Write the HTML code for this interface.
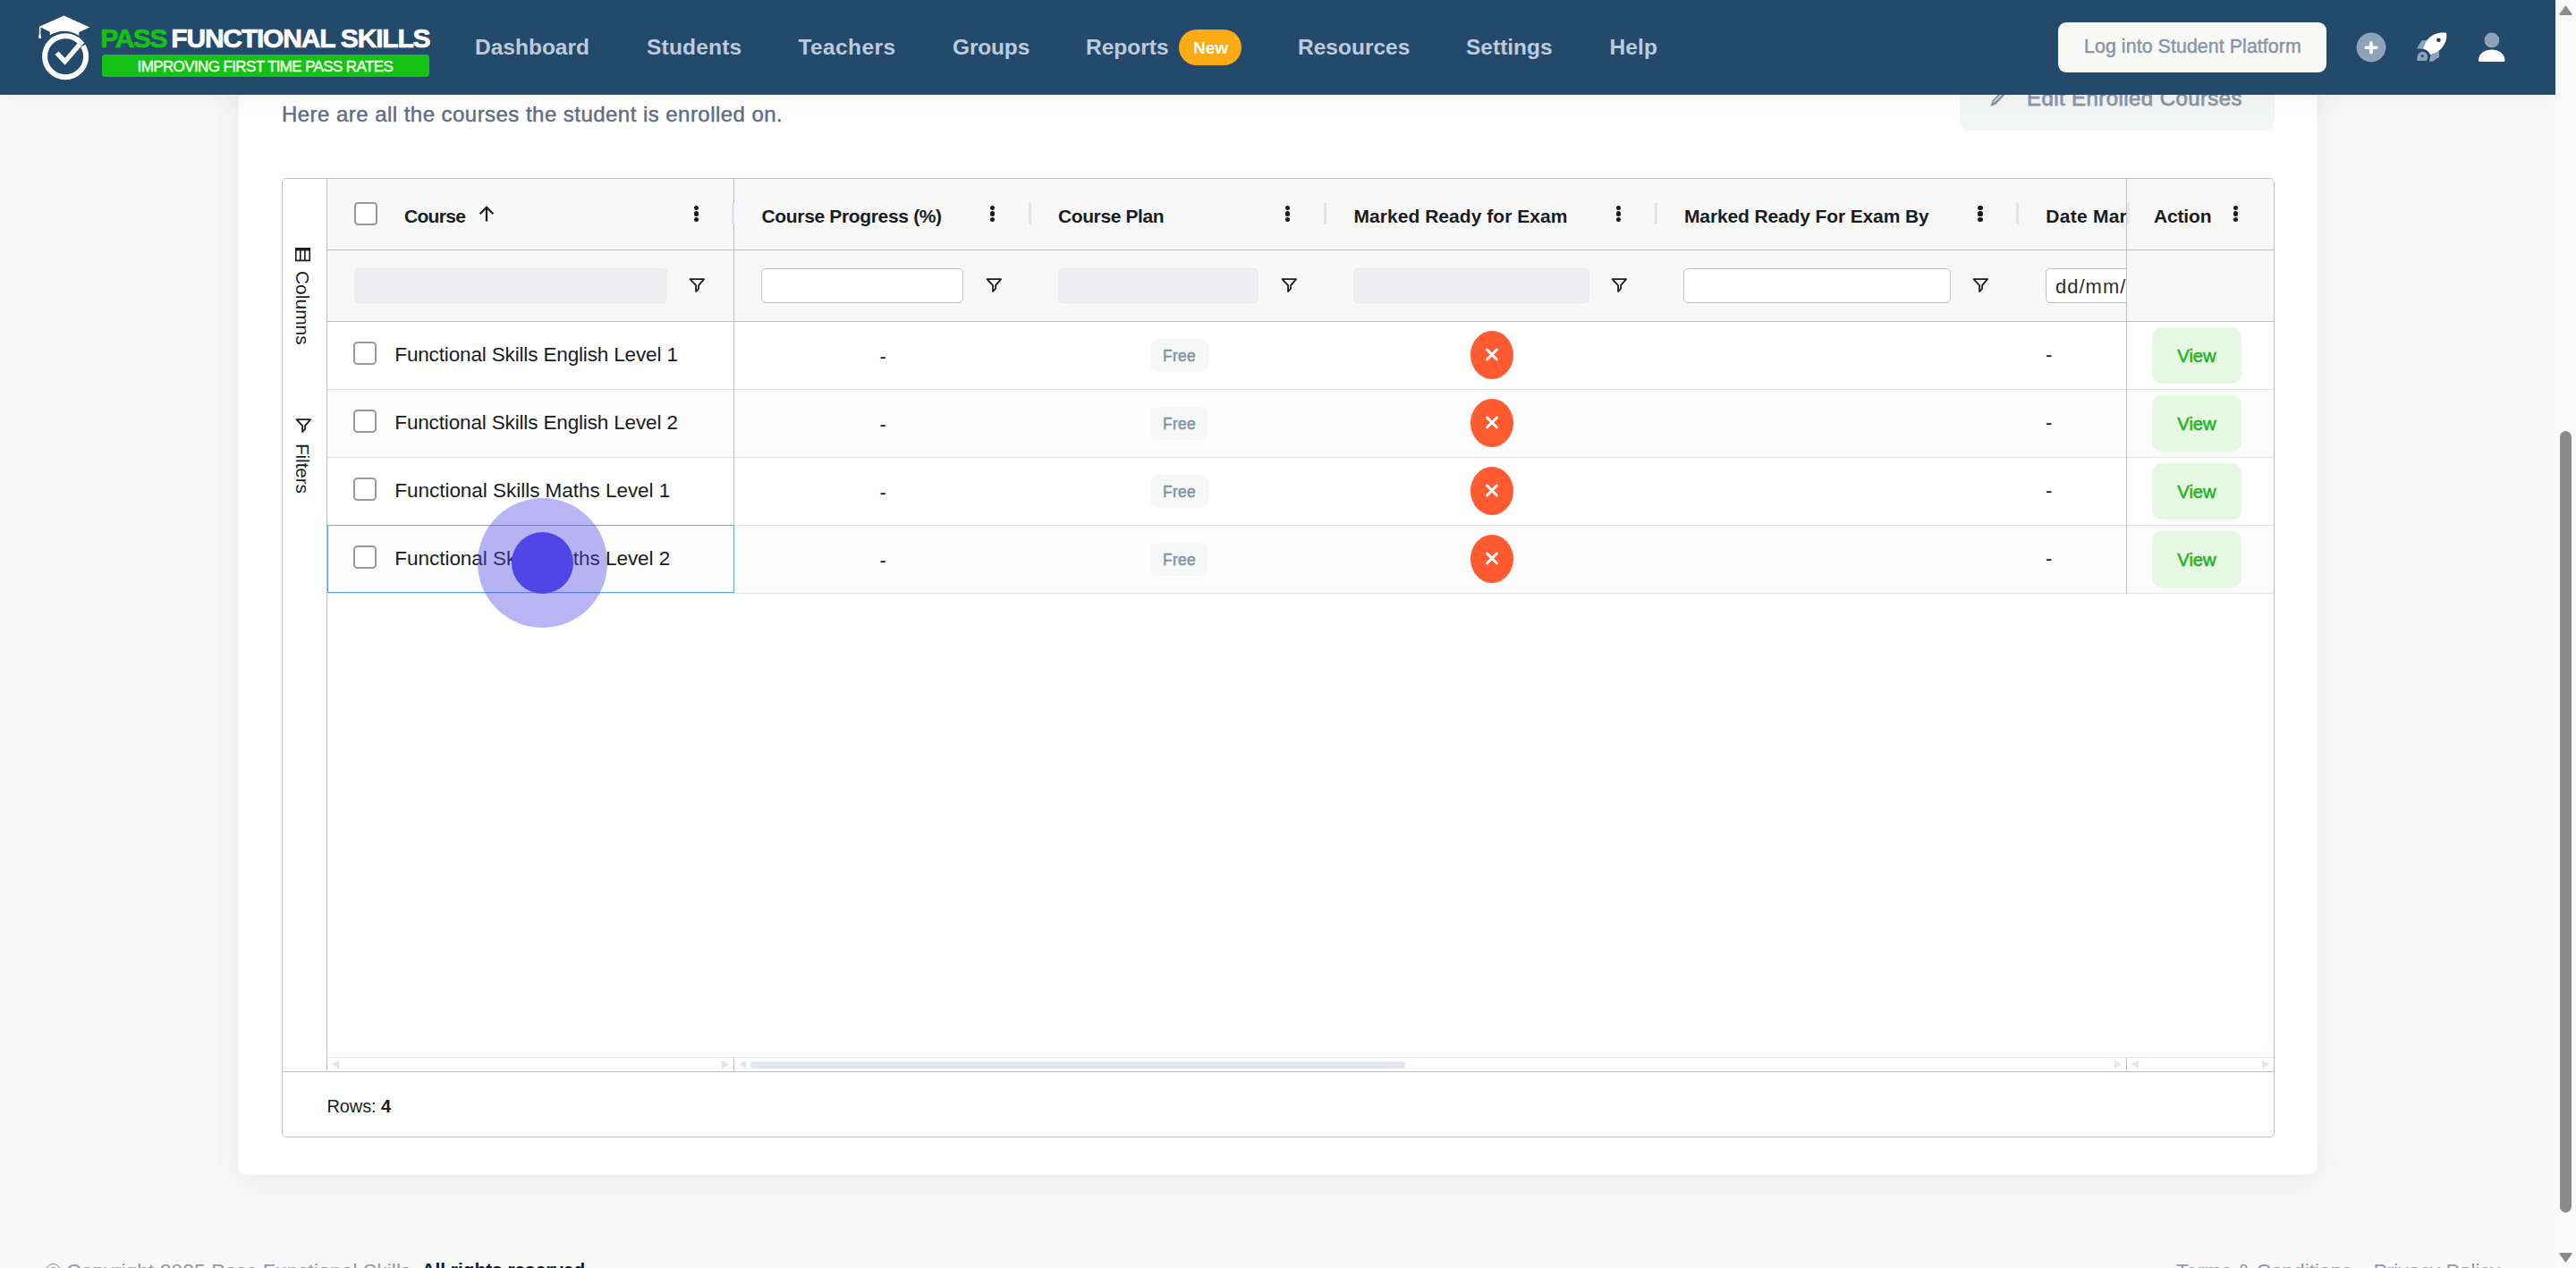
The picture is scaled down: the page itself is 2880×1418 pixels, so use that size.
<!DOCTYPE html>
<html lang="en">
<head>
<meta charset="utf-8">
<title>Pass Functional Skills</title>
<style>
*{box-sizing:border-box;margin:0;padding:0}
html,body{width:2880px;height:1418px;overflow:hidden;background:#f9f9f9;font-family:"Liberation Sans",sans-serif;}
.abs{position:absolute}
.t{position:absolute;white-space:nowrap;line-height:1}
/* header */
#hdr{position:absolute;left:0;top:0;width:2857px;height:106px;background:#244a6b;z-index:20;box-shadow:0 4px 26px rgba(60,60,70,.055)}
.nav{position:absolute;top:41.2px;font-weight:700;font-size:24.5px;color:#bdcade;white-space:nowrap;line-height:1}
/* card */
#card{position:absolute;left:266px;top:-40px;width:2325px;height:1354px;background:#fff;border-radius:9px;outline:1px solid rgba(0,0,0,.025);outline-offset:-1px;box-shadow:0 10px 38px rgba(70,75,90,.085);z-index:5}
#sub{position:absolute;left:49px;top:156px;font-size:24px;color:#5f6e83;white-space:nowrap;line-height:1;letter-spacing:.46px;-webkit-text-stroke:.45px #5f6e83}
/* grid */
#grid{position:absolute;left:315px;top:199px;width:2228px;height:1073px;border:1px solid #bcbfc5;border-radius:5px;background:#fff;z-index:6;overflow:hidden;color:#181d1f}
.hbg{position:absolute;left:50px;top:0;width:2176px;height:159px;background:#f8f8f8}
.vl{position:absolute;width:1px;background:#bcbfc5}
.hl{position:absolute;height:1px;background:#bcbfc5}
.rl{position:absolute;height:1px;background:#e0e4ea;left:50px;width:2176px}
.row{position:absolute;left:50px;width:2176px;height:75px}
.odd{background:#fcfcfc}
.hd{position:absolute;top:30.6px;font-weight:700;font-size:21px;white-space:nowrap;line-height:1;color:#181d1f}
.cb{position:absolute;width:25.7px;height:25.7px;border:2.6px solid #999;border-radius:4.5px;background:#fff}
.kb{position:absolute;top:29.6px;width:6px;height:20px}
.kb i{position:absolute;left:0;width:5.2px;height:5.2px;border-radius:50%;background:#181d1f}
.sep{position:absolute;top:26.5px;width:3px;height:24.5px;background:#e0e4eb}
.fin{position:absolute;top:100px;height:39px;border-radius:5px}
.fin.d{background:#efeff1;border:1px solid #e9eaec}
.fin.w{background:#fff;border:1px solid #bcbfc5}
.fic{position:absolute;top:110px;width:19px;height:18px}
.ct{position:absolute;font-size:22px;white-space:nowrap;line-height:1;color:#181d1f}
.free{position:absolute;left:970px;width:65px;height:37px;border-radius:8px;background:#f6f8f7;color:#8592a2;font-size:17.5px;font-weight:400;-webkit-text-stroke:.5px #8592a2;letter-spacing:.3px;text-align:center;line-height:39px}
.rx{position:absolute;left:1328px;width:48px;height:54px;border-radius:50%;background:#ff5a30}
.vw{position:absolute;left:2090px;width:100px;height:63px;border-radius:10px;background:#e6f7e4;color:#2bb32b;font-weight:400;-webkit-text-stroke:.65px #2bb32b;font-size:20.3px;letter-spacing:-.05px;text-align:center;line-height:65.5px}
</style>
</head>
<body>

<!-- ================= HEADER ================= -->
<div id="hdr">
  <svg class="abs" style="left:36px;top:10px" width="72" height="86" viewBox="36 10 72 86">
    <path d="M71.5 17.5 L100.3 30.4 L88.3 36 L88.3 39.7 Q72 30.1 55.8 39.3 L55.8 35.7 L45.6 30.6 L45.3 38.4 Q46.2 39.2 45.9 40.4 L46 43 L43.2 43 L43.3 40.4 Q43 39.2 43.9 38.4 L43.9 29.8 Z" fill="#fff"/>
    <circle cx="73.1" cy="63.2" r="23" fill="none" stroke="#fff" stroke-width="6"/>
    <path d="M88 52.6 L98 46.6" stroke="#244a6b" stroke-width="2.7" fill="none"/>
    <path d="M63.5 59.2 L72.6 68.9 L92.2 46" fill="none" stroke="#fff" stroke-width="5.3" stroke-linejoin="miter"/>
  </svg>
  <div class="t" style="left:112.3px;top:28.3px;font-size:30px;font-weight:700;color:#16c116;letter-spacing:-1.45px;-webkit-text-stroke:.7px #16c116">PASS</div>
  <div class="t" style="left:191.3px;top:28.3px;font-size:30px;font-weight:700;color:#fff;letter-spacing:-1.2px;-webkit-text-stroke:.7px #fff">FUNCTIONAL SKILLS</div>
  <div class="abs" style="left:114px;top:61px;width:366px;height:25px;border-radius:4px;background:#16c116"></div>
  <div class="t" style="left:153.6px;top:65.5px;font-size:17px;color:#eaffea;letter-spacing:-.62px;-webkit-text-stroke:.5px #eaffea">IMPROVING FIRST TIME PASS RATES</div>

  <div class="nav" style="left:531px">Dashboard</div>
  <div class="nav" style="left:723px;letter-spacing:.19px">Students</div>
  <div class="nav" style="left:892.5px;letter-spacing:.4px">Teachers</div>
  <div class="nav" style="left:1065px;letter-spacing:-.17px">Groups</div>
  <div class="nav" style="left:1214px">Reports</div>
  <div class="abs" style="left:1318px;top:33px;width:70px;height:40px;border-radius:20px;background:#fcab14"></div>
  <div class="t" style="left:1334px;top:43.5px;font-size:19px;font-weight:700;color:#fff">New</div>
  <div class="nav" style="left:1451px">Resources</div>
  <div class="nav" style="left:1639px">Settings</div>
  <div class="nav" style="left:1799.5px;letter-spacing:.15px">Help</div>

  <div class="abs" style="left:2301px;top:25px;width:300px;height:56px;border-radius:9px;background:#f8f9f7"></div>
  <div class="t" style="left:2330px;top:42px;font-size:21.4px;color:#8995a6;letter-spacing:.06px;-webkit-text-stroke:.45px #8995a6">Log into Student Platform</div>

  <!-- plus -->
  <svg class="abs" style="left:2634px;top:36px" width="34" height="34" viewBox="0 0 34 34">
    <circle cx="17" cy="17" r="16.4" fill="#8ea3ba"/>
    <path d="M11.3 17.2 H22.9 M17 11.8 V22.7" stroke="#fff" stroke-width="3.6" stroke-linecap="round"/>
  </svg>
  <!-- rocket -->
  <svg class="abs" style="left:2700px;top:35px" width="38" height="36" viewBox="2700 35 38 36">
    <path d="M2707.6 45.2 L2713.8 44.8 L2709.4 54.8 L2702 54.2 Z" fill="#8ea3ba"/>
    <path d="M2717.5 61.4 L2727 56.8 L2727 64 L2719.6 68.8 L2715.9 68.8 Z" fill="#8ea3ba"/>
    <path d="M2735.1 36.9 C2728 35.8 2719.5 37.5 2713.5 44.9 C2711.5 48 2710 51.5 2709.2 54.8 C2713 55.5 2716 58 2717 61.2 C2720.5 60.3 2724 58.8 2726.9 56.6 C2733 51.5 2736.3 44 2735.1 36.9 Z" fill="#fff"/>
    <circle cx="2726.4" cy="44.7" r="2.3" fill="#1c3a55"/>
    <path d="M2701.7 68.8 C2701 63 2703 58.5 2707.5 57 C2712 56.3 2715 60 2715 64 C2715 66.5 2713.5 68.8 2711 68.8 Z" fill="#8ea3ba" stroke="#244a6b" stroke-width="1.5"/>
    <circle cx="2708.3" cy="62.6" r="1.6" fill="#244a6b"/>
  </svg>
  <!-- user -->
  <svg class="abs" style="left:2768px;top:34px" width="36" height="38" viewBox="2768 34 36 38">
    <circle cx="2785.9" cy="45" r="8.4" fill="#8ea3ba"/>
    <path d="M2771 67.5 C2771 51.5 2800.4 51.5 2800.4 67.5 Q2800.4 69 2799 69 L2772.4 69 Q2771 69 2771 67.5 Z" fill="#fff"/>
  </svg>
</div>

<!-- ================= CARD ================= -->
<div id="card">
  <div id="sub">Here are all the courses the student is enrolled on.</div>
  <!-- edit button (partially under header) -->
  <div class="abs" style="left:1925px;top:110px;width:352px;height:75.5px;border-radius:9px;background:#f4f5f5"></div>
  <svg class="abs" style="left:1958px;top:138px" width="20" height="22" viewBox="0 0 20 22">
    <path d="M1.6 21 L3.4 14.6 L13.6 4 L17.6 8 L7.4 18.8 Z" fill="#8a96a6"/><path d="M5.2 16.2 L14.6 6.6" stroke="#f1f2f3" stroke-width="1.1"/>
  </svg>
  <div class="t" style="left:2000px;top:138px;font-size:24px;font-weight:400;color:#8a96a6;letter-spacing:.42px;-webkit-text-stroke:.75px #8a96a6">Edit Enrolled Courses</div>
</div>

<!-- ================= GRID ================= -->
<div id="grid">
  <div class="hbg"></div>
  <!-- structure lines (coords relative to grid content origin 316,200) -->
  <div class="vl" style="left:49px;top:0;height:998px"></div>
  <div class="hl" style="left:50px;top:79px;width:2176px"></div>
  <div class="hl" style="left:50px;top:159px;width:2176px"></div>

  <!-- rows -->
  <div class="row" style="top:160px"></div>
  <div class="row odd" style="top:236px"></div>
  <div class="row" style="top:312px"></div>
  <div class="row odd" style="top:388px"></div>
  <div class="rl" style="top:235px"></div>
  <div class="rl" style="top:311px"></div>
  <div class="rl" style="top:387px"></div>
  <div class="rl" style="top:463px"></div>

  <div class="vl" style="left:504px;top:0;height:464px"></div><div class="vl" style="left:504px;top:983px;height:15px;z-index:3"></div>
  <div class="vl" style="left:2061px;top:0;height:464px"></div><div class="vl" style="left:2061px;top:983px;height:15px;z-index:3"></div>

  <!-- header cells -->
  <div class="cb" style="left:80.2px;top:26.3px"></div>
  <div class="hd" style="left:136px;letter-spacing:-.7px">Course</div>
  <svg class="abs" style="left:218px;top:29px" width="20" height="20" viewBox="0 0 20 20"><path d="M10 18.5 V3 M2.6 10.2 L10 2.8 L17.4 10.2" fill="none" stroke="#181d1f" stroke-width="2.2"/></svg>
  <div class="kb" style="left:459.7px"><i style="top:0"></i><i style="top:6.8px"></i><i style="top:13.6px"></i></div>
  <div class="sep" style="left:501.5px"></div>

  <div class="hd" style="left:535.5px;letter-spacing:-.34px">Course Progress (%)</div>
  <div class="kb" style="left:791.2px"><i style="top:0"></i><i style="top:6.8px"></i><i style="top:13.6px"></i></div>
  <div class="sep" style="left:834px"></div>

  <div class="hd" style="left:867px;letter-spacing:-.4px">Course Plan</div>
  <div class="kb" style="left:1121.3px"><i style="top:0"></i><i style="top:6.8px"></i><i style="top:13.6px"></i></div>
  <div class="sep" style="left:1164px"></div>

  <div class="hd" style="left:1197.5px;letter-spacing:.04px">Marked Ready for Exam</div>
  <div class="kb" style="left:1491.1px"><i style="top:0"></i><i style="top:6.8px"></i><i style="top:13.6px"></i></div>
  <div class="sep" style="left:1533.5px"></div>

  <div class="hd" style="left:1567px;letter-spacing:-.13px">Marked Ready For Exam By</div>
  <div class="kb" style="left:1895.4px"><i style="top:0"></i><i style="top:6.8px"></i><i style="top:13.6px"></i></div>
  <div class="sep" style="left:1938px"></div>

  <div class="abs" style="left:1960px;top:0;width:101px;height:159px;overflow:hidden">
    <div class="hd" style="left:11.3px;letter-spacing:.25px">Date Marked</div>
    <div class="fin w" style="left:11px;width:200px"></div>
    <div class="ct" style="left:22px;top:109.5px;color:#2e2e2e;letter-spacing:1.0px">dd/mm/yyyy</div>
  </div>
  <div class="sep" style="left:2062px;opacity:.8"></div>

  <div class="hd" style="left:2092px;letter-spacing:-.17px">Action</div>
  <div class="kb" style="left:2180.7px"><i style="top:0"></i><i style="top:6.8px"></i><i style="top:13.6px"></i></div>

  <!-- filter row -->
  <div class="fin d" style="left:80px;width:350px"></div>
  <div class="fin w" style="left:535px;width:226px"></div>
  <div class="fin d" style="left:867px;width:224px"></div>
  <div class="fin d" style="left:1197px;width:264px"></div>
  <div class="fin w" style="left:1566px;width:299px"></div>

  <svg class="fic" style="left:453.5px" viewBox="0 0 19 18"><path d="M1.5 2.1 H17.1 L11.1 9.2 V12.8 L8.1 16 V9.2 Z" fill="none" stroke="#181d1f" stroke-width="1.8" stroke-linejoin="round"/></svg>
  <svg class="fic" style="left:785.5px" viewBox="0 0 19 18"><path d="M1.5 2.1 H17.1 L11.1 9.2 V12.8 L8.1 16 V9.2 Z" fill="none" stroke="#181d1f" stroke-width="1.8" stroke-linejoin="round"/></svg>
  <svg class="fic" style="left:1115.5px" viewBox="0 0 19 18"><path d="M1.5 2.1 H17.1 L11.1 9.2 V12.8 L8.1 16 V9.2 Z" fill="none" stroke="#181d1f" stroke-width="1.8" stroke-linejoin="round"/></svg>
  <svg class="fic" style="left:1485px" viewBox="0 0 19 18"><path d="M1.5 2.1 H17.1 L11.1 9.2 V12.8 L8.1 16 V9.2 Z" fill="none" stroke="#181d1f" stroke-width="1.8" stroke-linejoin="round"/></svg>
  <svg class="fic" style="left:1889px" viewBox="0 0 19 18"><path d="M1.5 2.1 H17.1 L11.1 9.2 V12.8 L8.1 16 V9.2 Z" fill="none" stroke="#181d1f" stroke-width="1.8" stroke-linejoin="round"/></svg>

  <!-- sidebar -->
  <svg class="abs" style="left:14px;top:76.5px" width="17" height="16" viewBox="0 0 17 16"><path d="M0.8 1.5 H16.2 V14.4 H0.8 Z M5.8 3 V14 M10.9 3 V14" fill="none" stroke="#181d1f" stroke-width="1.6"/><rect x="0" y="0" width="17" height="3.4" fill="#181d1f"/></svg>
  <div class="t" style="left:32px;top:103px;font-size:20.8px;transform-origin:0 0;transform:rotate(90deg);color:#181d1f;letter-spacing:.1px">Columns</div>
  <svg class="abs" style="left:14px;top:267px;width:19px;height:18px" viewBox="0 0 19 18"><path d="M1.5 2.1 H17.1 L11.1 9.2 V12.8 L8.1 16 V9.2 Z" fill="none" stroke="#181d1f" stroke-width="1.8" stroke-linejoin="round"/></svg>
  <div class="t" style="left:32px;top:295.5px;font-size:20.8px;transform-origin:0 0;transform:rotate(90deg);color:#181d1f;letter-spacing:-.1px">Filters</div>

  <!-- row content -->
  <div class="cb" style="left:79px;top:182.2px"></div>
  <div class="cb" style="left:79px;top:258.2px"></div>
  <div class="cb" style="left:79px;top:334.2px"></div>
  <div class="cb" style="left:79px;top:410.2px"></div>
  <div class="ct" style="left:125.3px;top:185.8px;font-size:22.5px;letter-spacing:-.15px">Functional Skills English Level 1</div>
  <div class="ct" style="left:125.3px;top:261.8px;font-size:22.5px;letter-spacing:-.15px">Functional Skills English Level 2</div>
  <div class="ct" style="left:125.3px;top:337.8px;font-size:22.5px;letter-spacing:-.03px">Functional Skills Maths Level 1</div>
  <div class="ct" style="left:125.3px;top:413.8px;font-size:22.5px;letter-spacing:-.03px">Functional Skills Maths Level 2</div>

  <div class="ct" style="left:667.5px;top:188px">-</div>
  <div class="ct" style="left:667.5px;top:264px">-</div>
  <div class="ct" style="left:667.5px;top:340px">-</div>
  <div class="ct" style="left:667.5px;top:416px">-</div>

  <div class="free" style="top:179px">Free</div>
  <div class="free" style="top:255px">Free</div>
  <div class="free" style="top:331px">Free</div>
  <div class="free" style="top:407px">Free</div>

  <div class="rx" style="top:170px"><svg width="48" height="54" viewBox="0 0 48 54"><path d="M18.7 21.1 L29.3 31.7 M29.3 21.1 L18.7 31.7" stroke="#fff" stroke-width="3" stroke-linecap="round"/></svg></div>
  <div class="rx" style="top:246px"><svg width="48" height="54" viewBox="0 0 48 54"><path d="M18.7 21.1 L29.3 31.7 M29.3 21.1 L18.7 31.7" stroke="#fff" stroke-width="3" stroke-linecap="round"/></svg></div>
  <div class="rx" style="top:322px"><svg width="48" height="54" viewBox="0 0 48 54"><path d="M18.7 21.1 L29.3 31.7 M29.3 21.1 L18.7 31.7" stroke="#fff" stroke-width="3" stroke-linecap="round"/></svg></div>
  <div class="rx" style="top:398px"><svg width="48" height="54" viewBox="0 0 48 54"><path d="M18.7 21.1 L29.3 31.7 M29.3 21.1 L18.7 31.7" stroke="#fff" stroke-width="3" stroke-linecap="round"/></svg></div>

  <div class="ct" style="left:1971px;top:185.5px">-</div>
  <div class="ct" style="left:1971px;top:261.5px">-</div>
  <div class="ct" style="left:1971px;top:337.5px">-</div>
  <div class="ct" style="left:1971px;top:413.5px">-</div>

  <div class="vw" style="top:166px">View</div>
  <div class="vw" style="top:242px">View</div>
  <div class="vw" style="top:318px">View</div>
  <div class="vw" style="top:394px">View</div>

  <!-- focused cell -->
  <div class="abs" style="left:50px;top:387px;width:455px;height:76px;border:1px solid #64a7d8"></div>

  <!-- horizontal scrollbars -->
  <div class="rl" style="top:982px"></div>
  <div class="abs" style="left:50px;top:983px;width:2176px;height:15px;background:#fff"></div>
  <div class="abs" style="left:522.5px;top:986.5px;width:732px;height:8.5px;border-radius:5px;background:#e2e6ee"></div>
  <svg class="abs" style="left:50px;top:983px" width="2176" height="15" viewBox="0 0 2176 15" fill="#e4e6ed">
    <path d="M5 7.5 L13 2.5 V12.5Z"/><path d="M449 7.5 L441 2.5 V12.5Z"/>
    <path d="M460 7.5 L468 2.5 V12.5Z"/><path d="M2006 7.5 L1998 2.5 V12.5Z"/>
    <path d="M2017 7.5 L2025 2.5 V12.5Z"/><path d="M2171 7.5 L2163 2.5 V12.5Z"/>
  </svg>
  <div class="hl" style="left:0;top:998px;width:2226px"></div>

  <!-- status bar -->
  <div class="ct" style="left:49.5px;top:1026.5px;font-size:20px;letter-spacing:-.1px">Rows: <b>4</b></div>
</div>

<!-- click indicator -->
<div class="abs" style="left:533.5px;top:556.5px;width:145px;height:145px;border-radius:50%;background:rgba(79,70,229,.4);z-index:15"></div>
<div class="abs" style="left:571.5px;top:594.5px;width:69.5px;height:69.5px;border-radius:50%;background:#4f46e5;z-index:16"></div>

<!-- footer -->
<div class="t" style="left:51px;top:1410.2px;font-size:22.8px;color:#8f99a8;letter-spacing:.07px;z-index:4">© Copyright 2025 Pass Functional Skills.</div>
<div class="t" style="left:471.5px;top:1410.2px;font-size:20.8px;font-weight:700;color:#0f1a2a;z-index:4">All rights reserved.</div>
<div class="t" style="left:2433px;top:1410.2px;font-size:22.7px;color:#8f99a8;z-index:4">Terms &amp; Conditions</div>
<div class="t" style="left:2653.5px;top:1410.2px;font-size:22.8px;color:#8f99a8;z-index:4">Privacy Policy</div>

<!-- page scrollbar -->
<div class="abs" style="left:2857px;top:0;width:23px;height:1418px;background:#fafafa;z-index:30">
  <svg class="abs" style="left:0;top:0" width="23" height="1418" viewBox="0 0 23 1418">
    <path d="M11.5 7.6 L17.6 16 H5.4 Z" fill="#8b8b8b" stroke="#8b8b8b" stroke-width="2" stroke-linejoin="round"/>
    <rect x="5" y="482" width="13" height="874" rx="6.5" fill="#8b8b8b"/>
    <path d="M11.5 1410.4 L17.6 1402 H5.4 Z" fill="#8b8b8b" stroke="#8b8b8b" stroke-width="2" stroke-linejoin="round"/>
  </svg>
</div>

</body>
</html>
